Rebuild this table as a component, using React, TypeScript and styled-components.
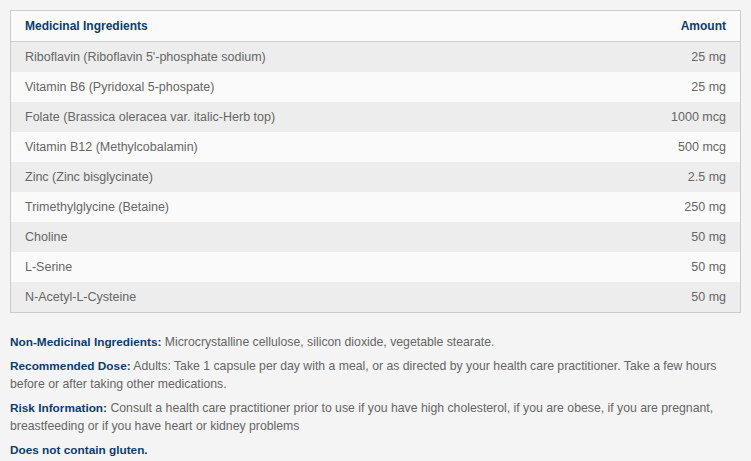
import styled, { createGlobalStyle } from "styled-components";

const GlobalStyle = createGlobalStyle`
  body {
    margin: 0;
    background: #f4f4f4;
    font-family: "Liberation Sans", Arial, sans-serif;
  }
`;

const ingredients = [
  { name: "Riboflavin (Riboflavin 5'-phosphate sodium)", amount: "25 mg" },
  { name: "Vitamin B6 (Pyridoxal 5-phospate)", amount: "25 mg" },
  { name: "Folate (Brassica oleracea var. italic-Herb top)", amount: "1000 mcg" },
  { name: "Vitamin B12 (Methylcobalamin)", amount: "500 mcg" },
  { name: "Zinc (Zinc bisglycinate)", amount: "2.5 mg" },
  { name: "Trimethylglycine (Betaine)", amount: "250 mg" },
  { name: "Choline", amount: "50 mg" },
  { name: "L-Serine", amount: "50 mg" },
  { name: "N-Acetyl-L-Cysteine", amount: "50 mg" },
];

function App() {
  return (
    <>
      <GlobalStyle />
      <Wrapper>
        <Table>
          <thead>
            <tr>
              <HeadCell>Medicinal Ingredients</HeadCell>
              <HeadCell $right>Amount</HeadCell>
            </tr>
          </thead>
          <tbody>
            {ingredients.map((item, i) => (
              <Row key={item.name} $striped={i % 2 === 0}>
                <Cell>{item.name}</Cell>
                <Cell $right>{item.amount}</Cell>
              </Row>
            ))}
          </tbody>
        </Table>
        <Notes>
          <Note>
            <Label>Non-Medicinal Ingredients:</Label> Microcrystalline cellulose, silicon
            dioxide, vegetable stearate.
          </Note>
          <Note>
            <Label>Recommended Dose:</Label> Adults: Take 1 capsule per day with a meal, or as
            directed by your health care practitioner. Take a few hours before or after taking
            other medications.
          </Note>
          <Note>
            <Label>Risk Information:</Label> Consult a health care practitioner prior to use if
            you have high cholesterol, if you are obese, if you are pregnant, breastfeeding or if
            you have heart or kidney problems
          </Note>
          <Note>
            <Label>Does not contain gluten.</Label>
          </Note>
        </Notes>
      </Wrapper>
    </>
  );
}

export default App;

const Wrapper = styled.div`
  padding: 10px 10px 0 10px;
`;

const Table = styled.table`
  width: 100%;
  border-collapse: collapse;
  border: 1px solid #cccccc;
  background: #fafafa;
`;

const HeadCell = styled.th<{ $right?: boolean }>`
  height: 30px;
  padding: 0 14px;
  font-size: 12px;
  text-align: ${(p) => (p.$right ? "right" : "left")};
  color: #0d3c6e;
  font-weight: bold;
  border-bottom: 1px solid #cccccc;
`;

const Row = styled.tr<{ $striped: boolean }>`
  background: ${(p) => (p.$striped ? "#ededed" : "#fafafa")};
`;

const Cell = styled.td<{ $right?: boolean }>`
  height: 30px;
  padding: 0 14px;
  font-size: 12.5px;
  text-align: ${(p) => (p.$right ? "right" : "left")};
  color: #666666;
`;

const Notes = styled.div`
  margin-top: 20px;
  display: flex;
  flex-direction: column;
  gap: 6px;
  font-size: 12.25px;
  line-height: 18px;
  color: #666666;
`;

const Note = styled.p`
  margin: 0;
`;

const Label = styled.strong`
  font-size: 11.8px;
  color: #0d3c6e;
`;
